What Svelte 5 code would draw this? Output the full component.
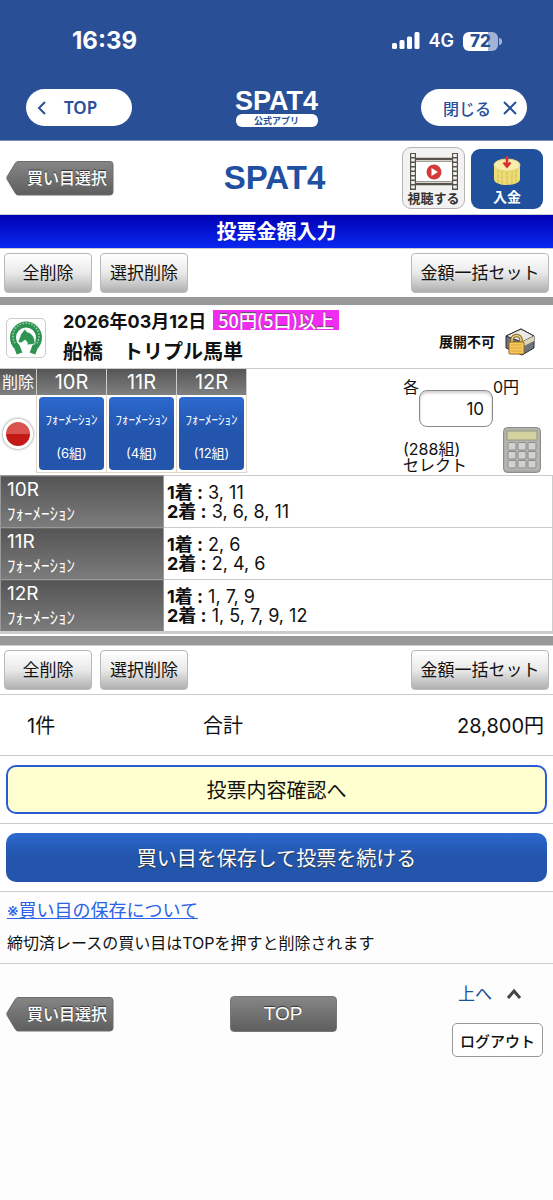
<script>
    const bets = [
        { race: "10R", count: 6, first: "3, 11", second: "3, 6, 8, 11" },
        { race: "11R", count: 4, first: "2, 6", second: "2, 4, 6" },
        { race: "12R", count: 12, first: "1, 7, 9", second: "1, 5, 7, 9, 12" },
    ];
    const keys = [0, 1, 2, 3, 4, 5, 6, 7, 8];
    const beads = [0, 1, 2, 3, 4, 5, 6, 7];
    let amount = "10";
</script>

{#snippet backButton()}
    <button class="back">
        <svg class="back-shape" viewBox="0 0 108 36" aria-hidden="true">
            <defs>
                <linearGradient id="backFill" x1="0" y1="0" x2="0" y2="1">
                    <stop offset="0" stop-color="#868686" />
                    <stop offset="1" stop-color="#5e5e5e" />
                </linearGradient>
            </defs>
            <path d="M12 1.500H104Q107 1.500 107 4.500V32Q107 35 104 35H12Q10.500 35 9.500 33.500L1.200 19.500Q.5 18 1.200 16.500L9.500 3Q10.500 1.500 12 1.500Z" fill="url(#backFill)" stroke="#6c6c6c" />
        </svg>
        <span>買い目選択</span>
    </button>
{/snippet}

{#snippet tools()}
    <div class="tools">
        <button class="tool">全削除</button>
        <button class="tool">選択削除</button>
        <button class="tool wide">金額一括セット</button>
    </div>
{/snippet}

<div class="page">
    <header class="app">
        <div class="status">
            <span class="clock">16:39</span>
            <div class="signal">
                <svg width="28" height="18" viewBox="0 0 28 18" fill="#fff" aria-hidden="true">
                    <rect x="0" y="11" width="5" height="6" rx="1.500" />
                    <rect x="7.500" y="8" width="5" height="9" rx="1.500" />
                    <rect x="15" y="4.500" width="5" height="12.500" rx="1.500" />
                    <rect x="22.500" y="0" width="5" height="17" rx="1.500" />
                </svg>
                <span class="net">4G</span>
                <span class="battery">72</span>
            </div>
        </div>
        <nav class="appbar">
            <button class="pill">
                <svg width="10" height="16" viewBox="0 0 10 16" aria-hidden="true"><path d="M8 2L2 8L8 14" /></svg>
                <span class="pill-top">TOP</span>
            </button>
            <div class="app-logo">
                <span class="logo-text">SPAT4</span>
                <span class="official">公式アプリ</span>
            </div>
            <button class="pill close">
                <span>閉じる</span>
                <svg width="14" height="14" viewBox="0 0 14 14" aria-hidden="true"><path d="M1 1L13 13M13 1L1 13" /></svg>
            </button>
        </nav>
    </header>

    <div class="site">
        {@render backButton()}
        <div class="site-logo">SPAT4</div>
        <div class="links">
            <button class="watch">
                <svg width="50" height="38" viewBox="0 0 50 38" aria-hidden="true">
                    <rect x="7" y="7" width="36" height="23" fill="#fff" />
                    <rect x="1" y="0" width="6" height="37" fill="#57534a" />
                    <rect x="43" y="0" width="6" height="37" fill="#57534a" />
                    {#each beads as b}
                        <rect x="2.200" y={1 + b * 4.500} width="3.600" height="3" fill="#f2f2f0" />
                        <rect x="44.200" y={1 + b * 4.500} width="3.600" height="3" fill="#f2f2f0" />
                    {/each}
                    <path d="M7 6H43M7 31H43" stroke="#57534a" stroke-width="2.500" />
                    <path d="M7 8.500H43M7 28.500H43" stroke="#a09c90" />
                    <circle cx="25" cy="19" r="7.500" fill="#d23b3b" />
                    <path d="M22.500 15V23L29 19Z" fill="#fff" />
                </svg>
                <span>視聴する</span>
            </button>
            <button class="deposit">
                <svg width="28" height="32" viewBox="0 0 28 32" aria-hidden="true">
                    <path d="M1 10V24C1 32 27 32 27 24V10Z" fill="#eddc76" />
                    <path d="M5 14V28M9 15V29M14 16V30M19 15V29M23 14V28" stroke="#d9c662" stroke-width="1.500" stroke-dasharray="4 1" />
                    <ellipse cx="14" cy="10" rx="13" ry="6" fill="#f8edaa" stroke="#e6d67c" />
                    <path d="M14 1V10M10.500 7.500L14 11.500L17.500 7.500" stroke="#d8322f" stroke-width="2.500" fill="none" />
                </svg>
                <span>入金</span>
            </button>
        </div>
    </div>

    <h1>投票金額入力</h1>
    {@render tools()}

    <section class="ticket">
        <div class="race">
            <div class="badge">
                <svg width="36" height="36" viewBox="-18 -18 36 36" aria-hidden="true">
                    <path d="M-6.500 15.500L-9 9A13 13 0 1 1 9 9L6.500 15.500" fill="none" stroke="#2e9350" stroke-width="6" />
                    <path d="M-11 5A13 13 0 1 1 11 5" fill="none" stroke="#a5d3b3" stroke-width="1.500" stroke-dasharray="1.500 1.500" />
                    <path d="M-1 -9L1 -6C6 -5 9 -1 9 6L1 7C2 5 1 3 -1 2L-5 5L-8 4L-5 -4Z" fill="#2e9350" stroke="#fff" stroke-width=".6" />
                </svg>
            </div>
            <div class="title">
                <div>2026年03月12日<span class="tag">50円(5口)以上</span></div>
                <div class="name">船橋　トリプル馬単</div>
            </div>
            <div class="locked">
                <span>展開不可</span>
                <svg width="30" height="28" viewBox="0 0 30 28" aria-hidden="true">
                    <path d="M1 8L16 1L29 8V20L17 27L1 20Z" fill="#6c7480" stroke="#2d2d2d" />
                    <path d="M1 8L16 1L29 8L17 14Z" fill="#e9e9e5" stroke="#2d2d2d" />
                    <path d="M17 14L29 8V13L17 19Z" fill="#ddd6b6" />
                    <path d="M7 16V12A4.500 4.500 0 0 1 16 12V16" fill="none" stroke="#8e6820" stroke-width="3.500" />
                    <path d="M7 16V12A4.500 4.500 0 0 1 16 12V16" fill="none" stroke="#e9d59a" stroke-width="1.500" />
                    <rect x="4" y="14" width="15" height="12" rx="1" fill="#f5c95c" stroke="#97651a" />
                    <path d="M6 17H17M6 20H17M6 23H17" stroke="#d9a33c" />
                </svg>
            </div>
        </div>

        <div class="stake">
            <table class="races">
                <thead>
                    <tr>
                        <th class="del">削除</th>
                        {#each bets as bet}<th>{bet.race}</th>{/each}
                    </tr>
                </thead>
                <tbody>
                    <tr>
                        <td class="del"><button class="remove" aria-label="削除"></button></td>
                        {#each bets as bet}
                            <td>
                                <button class="formation"><span>ﾌｫｰﾒｰｼｮﾝ</span><span>({bet.count}組)</span></button>
                            </td>
                        {/each}
                    </tr>
                </tbody>
            </table>
            <div class="amount">
                <div class="entry">
                    <label for="amount">各</label>
                    <input id="amount" bind:value={amount} inputmode="numeric" />
                    <span>0円</span>
                </div>
                <div class="detail">
                    <p>(288組)<br />セレクト</p>
                    <button class="calc" aria-label="電卓">
                        <svg width="38" height="46" viewBox="0 0 38 46" aria-hidden="true">
                            <rect x=".5" y=".5" width="37" height="45" rx="4" fill="#a5a5a3" stroke="#8d8d8b" />
                            <rect x="1.500" y="1.500" width="35" height="42" rx="3" fill="#b5b5b2" />
                            <rect x="4" y="4" width="30" height="9" fill="#d3d3a0" stroke="#969681" />
                            {#each keys as k}
                                <rect x={5 + (k % 3) * 10} y={15.500 + Math.floor(k / 3) * 9} width="8" height="7.500" rx="1" fill="#d2d2d0" stroke="#8d8d8b" />
                            {/each}
                        </svg>
                    </button>
                </div>
            </div>
        </div>

        <table class="lines">
            <tbody>
                {#each bets as bet}
                    <tr>
                        <th>{bet.race}<br /><span>ﾌｫｰﾒｰｼｮﾝ</span></th>
                        <td><b>1着 :</b>&nbsp;{bet.first}<br /><b>2着 :</b>&nbsp;{bet.second}</td>
                    </tr>
                {/each}
            </tbody>
        </table>
    </section>

    {@render tools()}

    <div class="total">
        <span class="items">1件</span>
        <span>合計</span>
        <span class="sum">28,800円</span>
    </div>

    <div class="action"><button class="confirm">投票内容確認へ</button></div>
    <div class="action"><button class="save">買い目を保存して投票を続ける</button></div>

    <div class="notes">
        <a href="#save">※買い目の保存について</a>
        <p>締切済レースの買い目はTOPを押すと削除されます</p>
    </div>

    <footer>
        {@render backButton()}
        <button class="top">TOP</button>
        <div class="end">
            <a class="up" href="#app">
                上へ
                <svg width="16" height="12" viewBox="0 0 16 12" aria-hidden="true"><path d="M2 10L8 3L14 10" /></svg>
            </a>
            <button class="logout">ログアウト</button>
        </div>
    </footer>
</div>

<style>
    :global(body) {
        background: #fdfdfd;
    }
    .page {
        font-family: Inter, "Noto Sans CJK JP", sans-serif;
        font-size: 18px;
        line-height: 24px;
        color: #111;
    }
    button {
        font-family: inherit;
        margin: 0;
        padding: 0;
        border: none;
        background: none;
        color: inherit;
        cursor: pointer;
        white-space: nowrap;
    }
    svg {
        display: block;
    }
    p {
        margin: 0;
    }
    table {
        border-collapse: collapse;
    }

    .app {
        background: #294f97;
        color: #fff;
        border-bottom: 1px solid #7a8fc0;
    }
    .status {
        display: flex;
        justify-content: space-between;
        align-items: center;
        height: 82px;
        padding: 0 55px 0 72px;
    }
    .clock {
        font-size: 24px;
        font-weight: 700;
    }
    .signal {
        display: flex;
        align-items: center;
        gap: 9px;
    }
    .net {
        font-size: 18px;
        font-weight: 600;
    }
    .battery {
        width: 35px;
        height: 19px;
        border-radius: 6px;
        background: linear-gradient(90deg, #fff 72%, #a4b2d3 72%);
        color: #294f97;
        font-size: 17px;
        font-weight: 800;
        line-height: 19px;
        text-align: center;
        position: relative;
    }
    .battery::after {
        content: "";
        position: absolute;
        right: -4px;
        top: 6px;
        width: 3px;
        height: 7px;
        border-radius: 0 3px 3px 0;
        background: #a4b2d3;
    }
    .appbar {
        display: flex;
        justify-content: space-between;
        align-items: flex-start;
        height: 51px;
        padding: 7px 26px 0;
    }
    .pill {
        display: flex;
        align-items: center;
        width: 106px;
        height: 37px;
        padding-left: 11px;
        gap: 17px;
        box-sizing: border-box;
        border-radius: 19px;
        background: #fff;
        color: #294f97;
        font-size: 16px;
        font-weight: 500;
    }
    .pill-top {
        font-family: "Noto Sans", sans-serif;
        font-size: 17px;
        font-weight: 600;
    }
    .pill.close {
        padding-left: 22px;
        gap: 12px;
    }
    .pill svg {
        fill: none;
        stroke: #294f97;
        stroke-width: 2;
    }
    .app-logo {
        display: flex;
        flex-direction: column;
        align-items: center;
        width: 84px;
    }
    .logo-text,
    .site-logo {
        font-family: "Liberation Sans", sans-serif;
        font-weight: 700;
    }
    .logo-text {
        font-size: 27px;
        line-height: 25px;
    }
    .official {
        width: 82px;
        height: 13px;
        border-radius: 6px;
        background: #fff;
        color: #294f97;
        font-size: 9px;
        font-weight: 700;
        line-height: 13px;
        text-align: center;
    }

    .site {
        display: grid;
        grid-template-columns: 1fr auto 1fr;
        align-items: center;
        height: 73px;
        padding: 0 10px 0 6px;
        border-bottom: 1px solid #ccc;
        background: #fff;
    }
    .back {
        position: relative;
        width: 108px;
        height: 36px;
        padding-left: 14px;
        color: #fff;
        font-size: 16px;
        font-weight: 500;
        line-height: 34px;
        text-shadow: 0 -1px 1px #333;
    }
    .back-shape {
        position: absolute;
        inset: 0;
    }
    .back span {
        position: relative;
    }
    .site-logo {
        color: #20509f;
        font-size: 33px;
        line-height: 40px;
    }
    .links {
        display: flex;
        justify-content: flex-end;
        align-items: center;
        gap: 6px;
    }
    .links button {
        display: flex;
        flex-direction: column;
        align-items: center;
        box-sizing: border-box;
        border-radius: 9px;
        font-weight: 700;
    }
    .watch {
        width: 63px;
        height: 62px;
        padding-top: 5px;
        border: 1px solid #b5b5b5;
        background: #f2f2f2;
        color: #333;
        font-size: 13px;
        line-height: 14px;
    }
    .deposit {
        width: 72px;
        height: 60px;
        margin-top: 3px;
        padding-top: 6px;
        background: #20509b;
        color: #fff;
        font-size: 14px;
        line-height: 20px;
    }

    h1 {
        margin: 0;
        height: 33px;
        background: linear-gradient(#0000b4, #0a28f0);
        color: #fff;
        font-size: 20px;
        line-height: 35px;
        text-align: center;
    }
    .tools {
        display: flex;
        gap: 8px;
        padding: 4px;
        border-top: 1px solid #ccc;
        background: #fff;
    }
    .tool {
        width: 88px;
        height: 40px;
        box-sizing: border-box;
        border: 1px solid #b9b9b9;
        border-radius: 4px;
        background: linear-gradient(#fff, #e9e9e9 50%, #b0b0b0);
        font-size: 17px;
        line-height: 38px;
    }
    .wide {
        width: 138px;
        margin-left: auto;
    }

    .ticket {
        border-top: 8px solid #999;
        border-bottom: 9px solid #999;
        background: #fff;
    }
    .race {
        display: flex;
        height: 63px;
        padding: 0 18px 0 6px;
        font-weight: 700;
        border-bottom: 1px solid #ccc;
    }
    .badge {
        display: grid;
        place-items: center;
        width: 38px;
        height: 38px;
        margin-top: 13px;
        border: 1px solid #ccc;
        border-radius: 5px;
    }
    .title {
        padding: 2px 0 0 17px;
        line-height: 30px;
    }
    .name {
        font-size: 20px;
    }
    .tag {
        display: inline-block;
        margin-left: 7px;
        padding: 0 5px;
        background: #f02cf0;
        color: #fff;
        font-family: "Noto Sans CJK JP", sans-serif;
        font-weight: 500;
        line-height: 20px;
        text-shadow: 0 -1px 0 #555;
    }
    .locked {
        display: flex;
        align-items: center;
        gap: 10px;
        margin-left: auto;
        padding-top: 10px;
        font-size: 14px;
    }

    .stake {
        display: flex;
        justify-content: space-between;
        padding-bottom: 2px;
    }
    .races th {
        width: 69px;
        height: 26px;
        padding: 0;
        border-right: 1px solid #ccc;
        background: linear-gradient(#555, #808080);
        color: #fff;
        font-size: 20px;
        font-weight: 400;
        line-height: 26px;
    }
    .races th.del {
        width: 36px;
        font-size: 16px;
    }
    .races td {
        padding: 2px;
        border: 1px solid #e0d6cc;
        border-top: none;
    }
    .races td.del {
        border-left: none;
        border-bottom: none;
    }
    .remove {
        display: block;
        width: 30px;
        height: 30px;
        margin: auto;
        border: 3px solid #fff;
        border-radius: 50%;
        background: linear-gradient(#d9534f 50%, #c31a17 50%);
        box-shadow: 0 0 3px #666;
    }
    .formation {
        display: flex;
        flex-direction: column;
        align-items: center;
        justify-content: space-between;
        width: 65px;
        height: 73px;
        padding: 10px 0 5px;
        box-sizing: border-box;
        border-radius: 4px;
        background: linear-gradient(#2c68cf, #2255ab 50%);
        color: #fff;
        font-size: 13px;
        line-height: 24px;
    }
    .amount {
        width: 150px;
        padding-top: 6px;
        font-size: 16px;
    }
    .entry {
        display: flex;
    }
    .entry input {
        width: 74px;
        height: 37px;
        margin-top: 15px;
        padding: 0 8px;
        box-sizing: border-box;
        border: 1px solid #888;
        border-radius: 8px;
        background: #fff;
        box-shadow: inset 0 2px 3px #ccc;
        color: #111;
        font-family: inherit;
        font-size: 17px;
        text-align: right;
    }
    .detail {
        display: flex;
        justify-content: space-between;
        align-items: flex-start;
        padding-right: 12px;
        line-height: 16px;
    }
    .detail p {
        padding-top: 14px;
    }

    .lines {
        width: 100%;
        margin-bottom: 2px;
        table-layout: fixed;
        border-bottom: 3px solid #ccc;
    }
    .lines th {
        width: 156px;
        height: 51px;
        padding: 0 0 0 6px;
        border: 1px solid #999;
        background: linear-gradient(#555, #7c7c7c);
        color: #fff;
        font-size: 19px;
        font-weight: 400;
        line-height: 24px;
        text-align: left;
    }
    .lines th span {
        font-size: 17px;
    }
    .lines td {
        padding: 0 3px;
        border: 1px solid #ccc;
        line-height: 19px;
    }

    .total {
        display: grid;
        grid-template-columns: 176px 1fr auto;
        padding: 19px 9px 17px 27px;
        border-top: 1px solid #ccc;
        border-bottom: 1px solid #ccc;
        background: #fff;
        font-size: 20px;
    }
    .action {
        padding: 9px 6px;
        border-bottom: 1px solid #ccc;
        background: #fff;
    }
    .action button {
        display: block;
        width: 100%;
        height: 49px;
        border-radius: 10px;
        font-size: 20px;
    }
    .action .confirm {
        border: 2px solid #2a5bd7;
        background: #ffffd0;
    }
    .save {
        background: linear-gradient(#2c68cf, #2255ab 50%);
        color: #fff;
        text-shadow: 0 1px 1px #333;
    }
    .notes {
        padding: 7px 7px 8px;
        border-bottom: 1px solid #ccc;
        font-size: 16px;
    }
    .notes a {
        color: #2a62e8;
        font-size: 18px;
    }
    .notes p {
        padding-top: 8px;
    }
    footer {
        display: flex;
        justify-content: space-between;
        padding: 18px 10px 0 6px;
    }
    footer > :global(button) {
        margin-top: 14px;
    }
    .top {
        width: 107px;
        height: 36px;
        border: 1px solid #777;
        border-radius: 4px;
        background: linear-gradient(#868686, #5e5e5e);
        color: #fff;
        font-family: "Liberation Sans", sans-serif;
        font-size: 19px;
        text-shadow: 0 -1px 1px #333;
    }
    .end {
        display: flex;
        flex-direction: column;
        align-items: flex-end;
        gap: 17px;
    }
    .up {
        display: flex;
        align-items: center;
        gap: 14px;
        padding-right: 21px;
        color: #20509b;
        font-size: 17px;
        text-decoration: none;
    }
    .up svg {
        fill: none;
        stroke: #444;
        stroke-width: 3;
    }
    .logout {
        width: 91px;
        height: 34px;
        border: 1px solid #999;
        border-radius: 5px;
        background: #fff;
        font-size: 15px;
        font-weight: 500;
    }
</style>
